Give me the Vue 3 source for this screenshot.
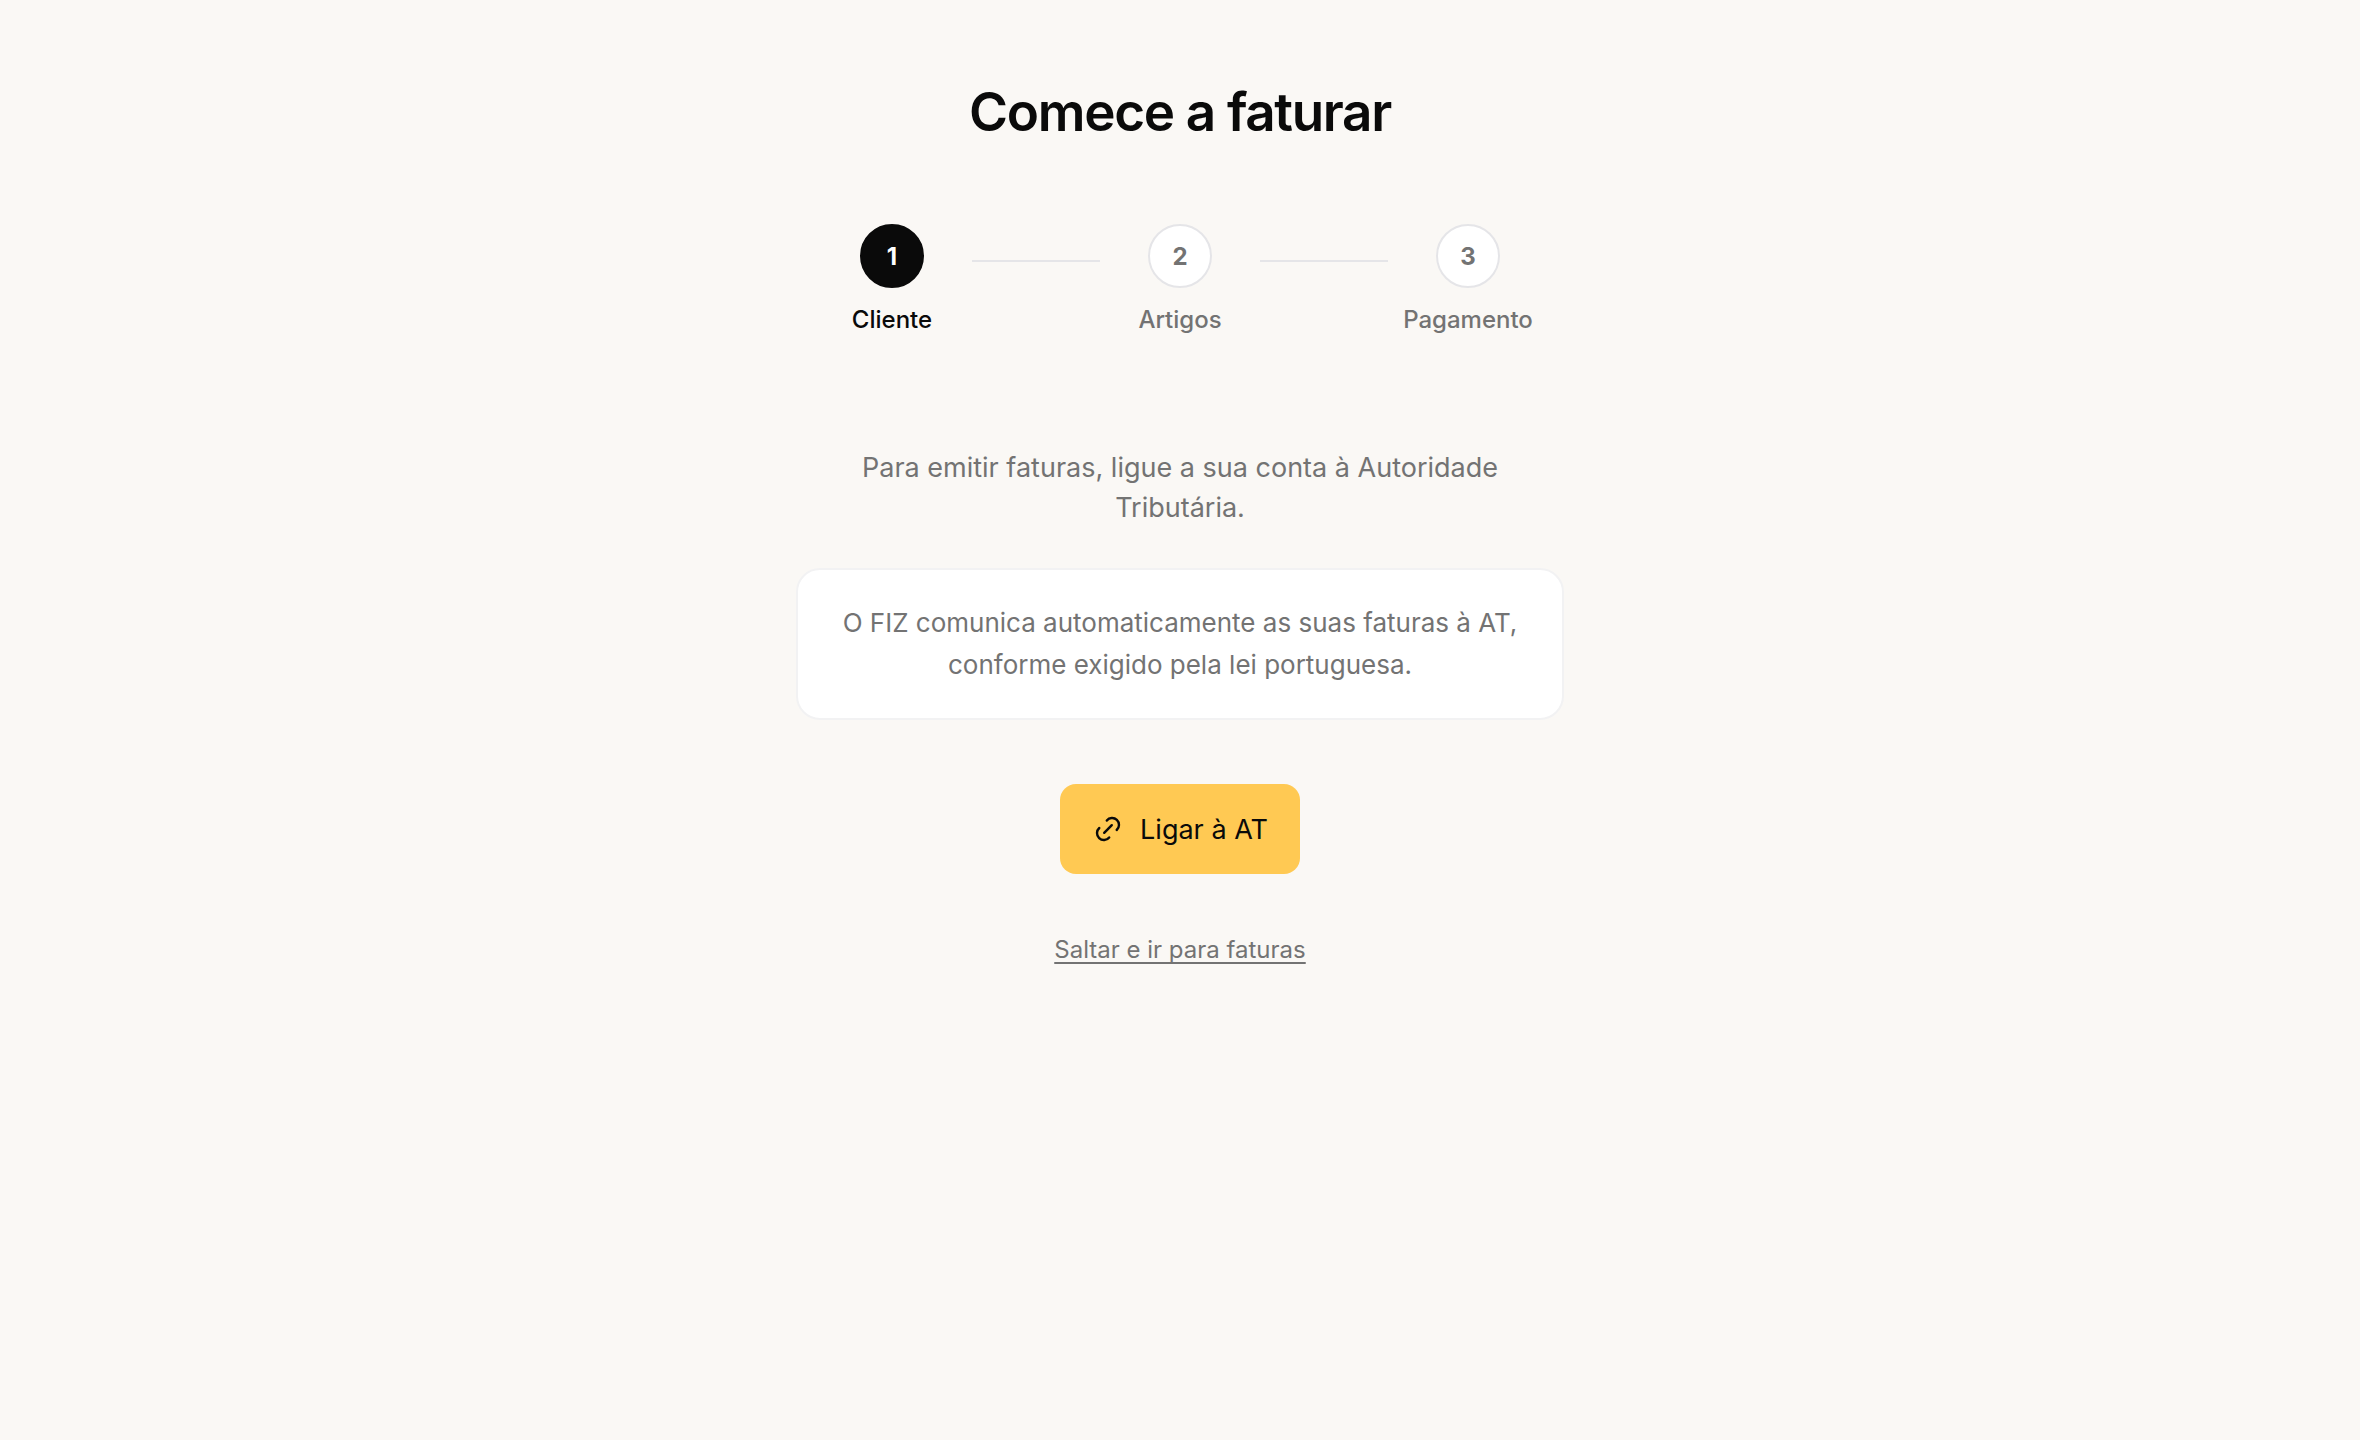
<script setup>
const steps = [
  { number: 1, label: 'Cliente', current: true },
  { number: 2, label: 'Artigos', current: false },
  { number: 3, label: 'Pagamento', current: false },
]
</script>

<template>
  <main class="page">
    <h1 class="title">Comece a faturar</h1>

    <ol class="steps">
      <li
        v-for="step in steps"
        :key="step.number"
        class="step"
        :class="{ current: step.current }"
        :aria-current="step.current ? 'step' : undefined"
      >
        <span class="badge">{{ step.number }}</span>
        <span class="label">{{ step.label }}</span>
      </li>
    </ol>

    <p class="intro">Para emitir faturas, ligue a sua conta à Autoridade Tributária.</p>

    <p class="note">
      O FIZ comunica automaticamente as suas faturas à AT,<br />
      conforme exigido pela lei portuguesa.
    </p>

    <button type="button" class="connect">
      <svg class="icon" viewBox="0 0 24 24" aria-hidden="true">
        <path d="M8.2 15.8 15.8 8.2" />
        <path d="M10.8 3.6A6.85 6.85 0 1 1 20.7 13" />
        <path d="M13.2 20.4A6.85 6.85 0 1 1 3.3 11" />
      </svg>
      Ligar à AT
    </button>

    <a href="#faturas" class="skip">Saltar e ir para faturas</a>
  </main>
</template>

<style>
body {
  background: #faf8f5;
}
</style>

<style scoped>
.page {
  display: flex;
  flex-direction: column;
  align-items: center;
  max-width: 768px;
  margin: 0 auto;
  padding: 80px 32px;
  font-family: Inter, "Liberation Sans", sans-serif;
  color: #737373;
}

.title {
  margin: 0;
  font-size: 53px;
  line-height: 64px;
  font-weight: 600;
  letter-spacing: -0.025em;
  color: #0a0a0a;
}

.steps {
  display: flex;
  margin: 80px 0 0;
  padding: 0;
  list-style: none;
}

.step {
  position: relative;
  display: flex;
  flex-direction: column;
  align-items: center;
  gap: 16px;
  width: 288px;
}

.step + .step::before {
  content: "";
  position: absolute;
  top: 36px;
  left: -64px;
  width: 128px;
  height: 2px;
  background: #e5e5e8;
}

.badge {
  display: flex;
  align-items: center;
  justify-content: center;
  box-sizing: border-box;
  width: 64px;
  height: 64px;
  border: 2px solid #e5e5e8;
  border-radius: 50%;
  background: #fff;
  font-size: 24px;
  font-weight: 700;
}

.label {
  font-size: 24px;
  line-height: 32px;
  font-weight: 500;
}

.current .badge {
  border-color: #0a0a0a;
  background: #0a0a0a;
  color: #fff;
}

.current .label {
  color: #0a0a0a;
}

.intro {
  max-width: 656px;
  margin: 112px 0 0;
  font-size: 27px;
  line-height: 40px;
  text-align: center;
}

.note {
  box-sizing: border-box;
  width: 100%;
  margin: 40px 0 0;
  padding: 32px;
  border: 2px solid #f2f2f3;
  border-radius: 24px;
  background: #fff;
  font-size: 26px;
  line-height: 42px;
  text-align: center;
}

.connect {
  display: flex;
  align-items: center;
  gap: 20px;
  height: 90px;
  margin: 64px 0 0;
  padding: 0 32px 0 36px;
  border: 0;
  border-radius: 16px;
  background: #ffc953;
  color: #0a0a0a;
  font: inherit;
  font-size: 27px;
  cursor: pointer;
}

.icon {
  width: 24px;
  height: 24px;
  overflow: visible;
  fill: none;
  stroke: currentColor;
  stroke-width: 2.4;
  stroke-linecap: round;
}

.skip {
  margin-top: 60px;
  font-size: 24px;
  line-height: 32px;
  color: inherit;
  text-decoration: underline;
  text-decoration-thickness: 2px;
  text-underline-offset: 4px;
  text-decoration-skip-ink: none;
}
</style>
